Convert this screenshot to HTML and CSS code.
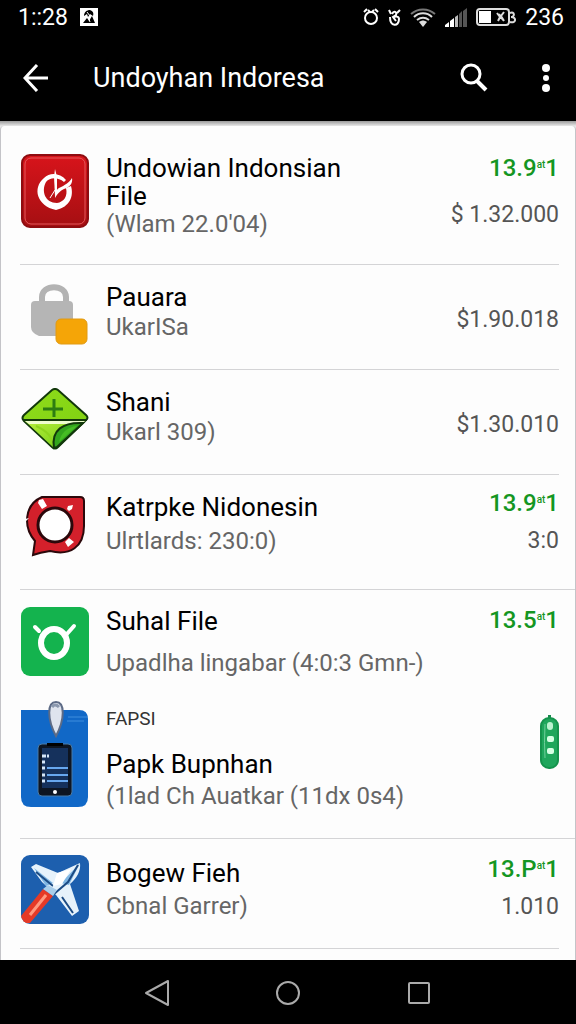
FILE: index.html
```html
<!DOCTYPE html>
<html lang="id">
<head>
    <meta charset="UTF-8">
    <meta name="viewport" content="width=device-width, initial-scale=1.0">
    <title>Undoyhan Indoresa</title>
    <link rel="stylesheet" href="styles.css">
</head>
<body>
    <header class="top">
        <div class="status-bar">
            <span>1::28</span>
            <svg width="18" height="18" viewBox="0 0 18 18">
                <rect width="18" height="18" fill="#fff"/>
                <path d="M4 8c0-4 3-6 6-6 3 1 4 3 3 6l-3-2-2 3-1-3zM3 15l4-5 2 3 3-5 3 7z" fill="#000"/>
                <path d="M7 4l3 4M9 11l1 3" stroke="#fff"/>
            </svg>
            <div class="status-icons">
                <svg width="16" height="18" viewBox="0 0 16 18" fill="none" stroke="#fff" stroke-width="2">
                    <circle cx="8" cy="10" r="6"/>
                    <path d="M1 4l3-3M15 4l-3-3M5 2l2 2M11 2L9 4"/>
                </svg>
                <svg width="13" height="18" viewBox="0 0 13 18" fill="none" stroke="#fff" stroke-width="2">
                    <path d="M1 2l2 4M12 2L9 5M2 9c0 10 9 10 9 2 0-3-4-3-6-1M4 6c2-4 5-2 4 1L5 9l3 4"/>
                </svg>
                <svg width="26" height="19" viewBox="0 0 26 19" fill="none" stroke-width="2">
                    <path d="M1 6c7-6 17-6 24 0" stroke="#777"/>
                    <path d="M4 9c5-5 13-5 18 0M7 12c4-3 8-3 12 0" stroke="#ddd"/>
                    <path d="M9 14c3-2 5-2 8 0l-4 5z" fill="#ddd"/>
                </svg>
                <svg width="22" height="19" viewBox="0 0 22 19">
                    <path d="M0 19v-2l4-3v5zM5 19v-6l4-3v9z" fill="#fff"/>
                    <path d="M10 19V9l3-2v12z" fill="#bbb"/>
                    <path d="M14 19V6l3-3v16zM18 19V3l4-3v19z" fill="#555"/>
                </svg>
                <svg width="40" height="18" viewBox="0 0 40 18" fill="none" stroke="#ddd">
                    <rect x="1" y="1" width="32" height="16" rx="3" stroke-width="2"/>
                    <rect x="3" y="3" width="12" height="12" fill="#fff" stroke="none"/>
                    <path d="M21 5l3 4-2 4M28 4l-3 4 3 5M23 6l4 6" stroke-width="2"/>
                    <path d="M34 5c5-2 5 4 1 4 6 0 5 7-1 5" stroke-width="2"/>
                </svg>
                <span>236</span>
            </div>
        </div>
        <div class="app-bar">
            <button class="icon-btn" aria-label="Back">
                <svg width="26" height="28" viewBox="0 0 26 28" fill="none" stroke="#fff" stroke-width="3">
                    <path d="M25 14H3M14 1L2 14l12 13"/>
                </svg>
            </button>
            <h1>Undoyhan Indoresa</h1>
            <button class="icon-btn" aria-label="Search">
                <svg width="28" height="29" viewBox="0 0 28 29" fill="none" stroke="#fff">
                    <circle cx="11" cy="11" r="9" stroke-width="3"/>
                    <path d="M17 18l9 9" stroke-width="4"/>
                </svg>
            </button>
            <button class="icon-btn more" aria-label="More options">
                <svg width="8" height="28" viewBox="0 0 8 28" fill="#fff">
                    <circle cx="4" cy="4" r="4"/>
                    <circle cx="4" cy="14" r="3"/>
                    <circle cx="4" cy="24" r="4"/>
                </svg>
            </button>
        </div>
    </header>

    <main>
        <ul class="list">
            <li class="row tall">
                <svg class="icon" width="68" height="74" viewBox="0 0 68 74">
                    <defs>
                        <linearGradient id="red" x2="0" y2="1">
                            <stop offset="0" stop-color="#d8141b"/>
                            <stop offset="1" stop-color="#a50f12"/>
                        </linearGradient>
                    </defs>
                    <rect x="1" y="1" width="66" height="72" rx="8" fill="url(#red)" stroke="#8e0c10" stroke-width="2"/>
                    <rect x="4" y="4" width="60" height="66" rx="6" fill="none" stroke="#e5585a"/>
                    <path d="M23 24c-12 10-7 28 12 32 14-3 18-14 15-24l-5 2c2 8-2 14-9 15-12 0-16-12-11-21 4-5 12-5 18 0l2-2c-6-7-16-8-22-2z" fill="#fff"/>
                    <path d="M51 24c1 5-2 9-8 11-4 2-6 4-9 9 0-5 1-8 4-10 6-3 10-5 13-10z" fill="#fff"/>
                    <path d="M34 15l2 8v15l-2 4-1-19z" fill="#fff"/>
                    <path d="M34 36l-5 8" stroke="#fff"/>
                </svg>
                <div class="text">
                    <h2>Undowian Indonsian<br>File</h2>
                    <p>(Wlam 22.0'04)</p>
                </div>
                <div class="side">
                    <span class="rate">13.9<sup>at</sup>1</span>
                    <span class="price low">$ 1.32.000</span>
                </div>
            </li>
            <li class="row">
                <svg class="icon" width="68" height="62" viewBox="0 0 68 62">
                    <path d="M21 21v-7c0-13 24-13 24 0v7" fill="none" stroke="#b3b3b3" stroke-width="6"/>
                    <path d="M14 18h34q4 0 4 4v31H18q-8-3-8-9V22q0-4 4-4z" fill="#b5b5b5"/>
                    <rect x="35" y="36" width="31" height="25" rx="5" fill="#f5a507" stroke="#e09a14"/>
                </svg>
                <div class="text">
                    <h2>Pauara</h2>
                    <p>UkarISa</p>
                </div>
                <div class="side single">
                    <span class="price">$1.90.018</span>
                </div>
            </li>
            <li class="row">
                <svg class="icon" width="68" height="62" viewBox="0 0 68 62">
                    <defs>
                        <linearGradient id="lime" x2="1" y2="1">
                            <stop offset="0" stop-color="#8fdc1c"/>
                            <stop offset="1" stop-color="#7ed00f"/>
                        </linearGradient>
                        <linearGradient id="fold" x2="1" y2="1">
                            <stop offset="0" stop-color="#b6ef3c"/>
                            <stop offset="1" stop-color="#6fc912"/>
                        </linearGradient>
                    </defs>
                    <path d="M31 2q3-2 6 0l28 25q3 3 0 5l-28 27q-3 3-6 0L3 33q-3-3 0-6z" fill="url(#lime)" stroke="#12380b" stroke-width="2"/>
                    <path d="M4 33h60L36 59q-2 1-4 0z" fill="url(#fold)"/>
                    <path d="M4 33h60l-4 3H8z" fill="#eefccf"/>
                    <path d="M15 38q16 7 17 19" fill="none" stroke="#8dd51e" stroke-width="2"/>
                    <path d="M62 35L36 59l-3 1c-3-18 9-26 29-25z" fill="#33a51d" stroke="#12380b" stroke-width="2"/>
                    <path d="M56 38L38 54c2-9 8-15 18-16z" fill="#46bd24"/>
                    <path d="M2 32h64" stroke="#12380b" stroke-width="2"/>
                    <path d="M22 21h20M33 11v18" stroke="#2d7d12" stroke-width="3"/>
                </svg>
                <div class="text">
                    <h2>Shani</h2>
                    <p>Ukarl 309)</p>
                </div>
                <div class="side single">
                    <span class="price">$1.30.010</span>
                </div>
            </li>
            <li class="row wide">
                <svg class="icon" width="68" height="64" viewBox="0 0 68 64">
                    <path d="M21 4h38q4 0 4 4v25c0 21-14 30-34 25-6 1-11 2-17 4l2-14C2 34 3 12 21 4z" fill="#d3202b" stroke="#2b080b" stroke-width="2"/>
                    <circle cx="34" cy="32" r="17" fill="#fff" stroke="#2b080b" stroke-width="3"/>
                    <path d="M18 7l4-1 4 7-5 3-4-6zM46 16l1-3 5-1-1 4-3 2zM44 49l4-4 5 4-6 5zM4 26l4-1-3 3zM62 36l3-2-3 2z" fill="#fff"/>
                </svg>
                <div class="text">
                    <h2>Katrpke Nidonesin</h2>
                    <p>Ulrtlards: 230:0)</p>
                </div>
                <div class="side">
                    <span class="rate">13.9<sup>at</sup>1</span>
                    <span class="price">3:0</span>
                </div>
            </li>
            <li class="row open">
                <svg class="icon" width="68" height="69" viewBox="0 0 68 69">
                    <rect width="68" height="69" rx="9" fill="#14b34e"/>
                    <ellipse cx="33" cy="36" rx="13" ry="14" fill="none" stroke="#fff" stroke-width="6"/>
                    <path d="M14 20l4 4M45 28l8-9" stroke="#fff" stroke-width="4" stroke-linecap="round"/>
                </svg>
                <div class="text">
                    <h2>Suhal File</h2>
                    <p>Upadlha lingabar (4:0:3 Gmn-)</p>
                </div>
                <div class="side">
                    <span class="rate">13.5<sup>at</sup>1</span>
                </div>
            </li>
            <li class="row labelled">
                <svg class="icon" width="68" height="108" viewBox="0 0 68 108">
                    <path d="M0 9h58q9 0 9 9v78q0 10-10 10H10Q0 106 0 96z" fill="#1168c7"/>
                    <path d="M47 16h20M46 20h17" stroke="#3f8ddd"/>
                    <path d="M35 35C26 18 26 1 35 1s9 17 0 34z" fill="#dfe4ee" stroke="#5d6b86" stroke-width="2"/>
                    <path d="M31 6q3-4 7 0" fill="none" stroke="#8b98ae" stroke-width="3"/>
                    <rect x="17" y="43" width="34" height="52" rx="4" fill="#0d1522" stroke="#4a7ba6"/>
                    <rect x="21" y="47" width="26" height="40" fill="#15315c"/>
                    <path d="M26 42h16v3H26z" fill="#000"/>
                    <path d="M26 67h21M26 74h21M26 80h21" stroke="#67a7ee" stroke-width="2"/>
                    <path d="M21 55h4M26 55h2M21 61h3M21 67h3M21 74h3M21 80h3" stroke="#d5e6f7" stroke-width="3"/>
                    <circle cx="34" cy="91" r="2" fill="#fff"/>
                </svg>
                <div class="text">
                    <span class="label">FAPSI</span>
                    <h2>Papk Bupnhan</h2>
                    <p>(1lad Ch Auatkar (11dx 0s4)</p>
                </div>
                <div class="side">
                    <svg class="pill" width="19" height="54" viewBox="0 0 19 54">
                        <path d="M8 0h3v4H8z" fill="#178a4c"/>
                        <rect x="1" y="3" width="17" height="50" rx="8" fill="#1fa65c" stroke="#14934c" stroke-width="2"/>
                        <path d="M5 9q-1 20 0 34" fill="none" stroke="#6fd09b"/>
                        <rect x="7" y="7" width="6" height="8" rx="3" fill="#baf2cf"/>
                        <rect x="7" y="21" width="7" height="6" rx="2" fill="#d6ffe4"/>
                        <rect x="7" y="33" width="7" height="6" rx="2" fill="#d6ffe4"/>
                    </svg>
                </div>
            </li>
            <li class="row last">
                <svg class="icon" width="68" height="69" viewBox="0 0 68 69">
                    <defs>
                        <clipPath id="tile"><rect width="68" height="69" rx="9"/></clipPath>
                    </defs>
                    <rect width="68" height="69" rx="9" fill="#1d5fae"/>
                    <g clip-path="url(#tile)">
                        <path d="M10 12l5-3 22 9L59 8c1 8-3 15-10 21l9 27-7 5-16-21-14-13z" fill="#e6f2fb"/>
                        <path d="M13 13l19 15-7 3zM59 8L48 30l-8-2z" fill="#7fb6e3"/>
                        <path d="M15 17l17 14M57 10L47 27 33 39M41 42l11 16" fill="none" stroke="#1c4b84" stroke-width="2"/>
                        <path d="M36 18l-4 13 9-2 9-15z" fill="#fff"/>
                        <path d="M22 34l10 7L9 68H0v-7z" fill="#e53a27"/>
                        <path d="M25 40L9 60" stroke="#ff9a80" stroke-width="3"/>
                        <path d="M22 34l5-4 9 5-4 6z" fill="#a9cdea"/>
                    </g>
                </svg>
                <div class="text">
                    <h2>Bogew Fieh</h2>
                    <p>Cbnal Garrer)</p>
                </div>
                <div class="side">
                    <span class="rate">13.P<sup>at</sup>1</span>
                    <span class="price">1.010</span>
                </div>
            </li>
        </ul>
    </main>

    <nav class="nav-bar">
        <button aria-label="Back">
            <svg width="26" height="28" viewBox="0 0 26 28" fill="none" stroke="#aaa" stroke-width="2">
                <path d="M24 2v24L2 14z" stroke-linejoin="round"/>
            </svg>
        </button>
        <button aria-label="Home">
            <svg width="26" height="26" viewBox="0 0 26 26" fill="none" stroke="#aaa" stroke-width="2">
                <circle cx="13" cy="13" r="11"/>
            </svg>
        </button>
        <button aria-label="Recent apps">
            <svg width="24" height="24" viewBox="0 0 24 24" fill="none" stroke="#aaa" stroke-width="2">
                <rect x="2" y="2" width="20" height="20" rx="1"/>
            </svg>
        </button>
    </nav>
</body>
</html>
```
FILE: styles.css
```css
* {
    box-sizing: border-box;
}
body {
    margin: 0;
    min-height: 100vh;
    display: flex;
    flex-direction: column;
    font-family: Roboto, "Liberation Sans", sans-serif;
    background-color: #000;
}
h1, h2, p, ul {
    margin: 0;
    padding: 0;
}
button {
    background: none;
    border: none;
    padding: 0;
    cursor: pointer;
}
svg {
    display: block;
    flex: none;
}
.top {
    background-color: #000;
    color: #fff;
}
.status-bar {
    display: flex;
    align-items: center;
    gap: 12px;
    height: 34px;
    padding: 0 12px 0 18px;
    font-size: 23px;
}
.status-icons {
    display: flex;
    align-items: center;
    gap: 9px;
    margin-left: auto;
}
.app-bar {
    display: flex;
    align-items: center;
    height: 87px;
    padding: 0 20px 0 12px;
}
.app-bar h1 {
    flex: 1;
    padding-left: 33px;
    font-size: 27px;
    font-weight: 400;
}
.icon-btn {
    display: grid;
    place-items: center;
    width: 48px;
    height: 48px;
}
.more {
    width: 12px;
    margin: 0 4px 0 42px;
}
main {
    flex: 1;
    display: flex;
    padding-top: 5px;
    background: linear-gradient(#9a9a9a, #e8e8e8 5px);
}
.list {
    flex: 1;
    border: 1px solid #c4c4c8;
    border-top: none;
    border-bottom: none;
    border-radius: 4px 4px 0 0;
    background-color: #fdfdfd;
    list-style: none;
    padding-left: 19px;
}
.row {
    display: grid;
    grid-template-columns: 68px 1fr auto;
    column-gap: 17px;
    align-items: start;
    margin-right: 16px;
    padding: 18px 0 24px 1px;
    border-bottom: 1px solid #d4d4d6;
}
.text h2 {
    font-size: 26px;
    line-height: 28px;
    font-weight: 400;
    color: #000;
}
.text p {
    margin-top: 2px;
    font-size: 24px;
    line-height: 28px;
    color: #666;
}
.label {
    display: block;
    font-size: 19px;
    line-height: 22px;
    color: #333;
}
.side {
    display: flex;
    flex-direction: column;
    align-items: flex-end;
    gap: 10px;
    line-height: 28px;
    white-space: nowrap;
}
.rate {
    font-size: 24px;
    font-weight: 500;
    color: #149622;
}
.rate sup {
    font-size: 10px;
    line-height: 1;
    vertical-align: 8px;
}
.price {
    font-size: 23px;
    color: #555;
}
.single {
    padding-top: 23px;
}
.tall {
    padding-top: 28px;
    padding-bottom: 26px;
}
.tall p {
    margin-top: 0;
}
.low {
    margin-top: 9px;
}
.wide {
    padding-top: 14px;
    padding-bottom: 32px;
}
.wide .icon,
.wide .text {
    margin-top: 4px;
}
.wide p {
    margin-top: 6px;
}
.wide,
.labelled {
    margin-right: 0;
    padding-right: 16px;
}
.open {
    padding-top: 16px;
    border-bottom: none;
}
.open .icon,
.open .text {
    margin-top: 1px;
}
.open p {
    margin-top: 14px;
}
.labelled {
    padding-top: 0;
    padding-bottom: 28px;
}
.labelled .text {
    padding-top: 7px;
}
.labelled h2 {
    margin-top: 20px;
}
.labelled p {
    margin-top: 4px;
}
.pill {
    margin-top: 14px;
}
.last {
    padding-top: 16px;
}
.last .text {
    padding-top: 4px;
}
.last p {
    margin-top: 5px;
}
.nav-bar {
    display: grid;
    grid-template-columns: repeat(3, 1fr);
    place-items: center;
    height: 64px;
    padding: 2px 16% 0;
    background-color: #000;
}
```
